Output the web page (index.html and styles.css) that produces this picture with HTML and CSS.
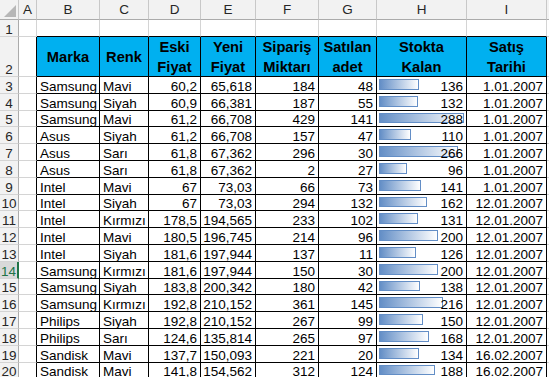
FILE: index.html
```html
<!DOCTYPE html>
<html lang="tr">
<head>
<meta charset="utf-8">
<title>Stok</title>
<link rel="stylesheet" href="styles.css">
</head>
<body>
<div class="sheet">
  <div class="ch corner"><svg width="18" height="19" viewBox="0 0 18 19"><polygon points="16,5 16,17 4,17" fill="#b7b7b7"/></svg></div>
  <div class="ch">A</div><div class="ch">B</div><div class="ch">C</div><div class="ch">D</div><div class="ch">E</div><div class="ch">F</div><div class="ch">G</div><div class="ch">H</div><div class="ch">I</div><div class="ch last"></div>

  <div class="rh">1</div><div class="c"></div><div class="c top"></div><div class="c top"></div><div class="c top"></div><div class="c top"></div><div class="c top"></div><div class="c top"></div><div class="c top"></div><div class="c top"></div><div class="c"></div>

  <div class="rh">2</div><div class="c a"></div>
  <div class="c t hd">Marka</div><div class="c t hd">Renk</div><div class="c t hd">Eski<br>Fiyat</div><div class="c t hd">Yeni<br>Fiyat</div><div class="c t hd">Sipariş<br>Miktarı</div><div class="c t hd">Satılan<br>adet</div><div class="c t hd">Stokta<br>Kalan</div><div class="c t hd">Satış<br>Tarihi</div><div class="c"></div>

  <div class="rh">3</div><div class="c a"></div><div class="c t">Samsung</div><div class="c t">Mavi</div><div class="c t n">60,2</div><div class="c t n">65,618</div><div class="c t n">184</div><div class="c t n">48</div><div class="c t n db"><span class="track"><span class="bar" style="width:47.2%"></span></span><span class="v">136</span></div><div class="c t n">1.01.2007</div><div class="c"></div>
  <div class="rh">4</div><div class="c a"></div><div class="c t">Samsung</div><div class="c t">Siyah</div><div class="c t n">60,9</div><div class="c t n">66,381</div><div class="c t n">187</div><div class="c t n">55</div><div class="c t n db"><span class="track"><span class="bar" style="width:45.8%"></span></span><span class="v">132</span></div><div class="c t n">1.01.2007</div><div class="c"></div>
  <div class="rh">5</div><div class="c a"></div><div class="c t">Samsung</div><div class="c t">Mavi</div><div class="c t n">61,2</div><div class="c t n">66,708</div><div class="c t n">429</div><div class="c t n">141</div><div class="c t n db"><span class="track"><span class="bar" style="width:100%"></span></span><span class="v">288</span></div><div class="c t n">1.01.2007</div><div class="c"></div>
  <div class="rh">6</div><div class="c a"></div><div class="c t">Asus</div><div class="c t">Siyah</div><div class="c t n">61,2</div><div class="c t n">66,708</div><div class="c t n">157</div><div class="c t n">47</div><div class="c t n db"><span class="track"><span class="bar" style="width:38.2%"></span></span><span class="v">110</span></div><div class="c t n">1.01.2007</div><div class="c"></div>
  <div class="rh">7</div><div class="c a"></div><div class="c t">Asus</div><div class="c t">Sarı</div><div class="c t n">61,8</div><div class="c t n">67,362</div><div class="c t n">296</div><div class="c t n">30</div><div class="c t n db"><span class="track"><span class="bar" style="width:92.4%"></span></span><span class="v">266</span></div><div class="c t n">1.01.2007</div><div class="c"></div>
  <div class="rh">8</div><div class="c a"></div><div class="c t">Asus</div><div class="c t">Sarı</div><div class="c t n">61,8</div><div class="c t n">67,362</div><div class="c t n">2</div><div class="c t n">27</div><div class="c t n db"><span class="track"><span class="bar" style="width:33.3%"></span></span><span class="v">96</span></div><div class="c t n">1.01.2007</div><div class="c"></div>
  <div class="rh">9</div><div class="c a"></div><div class="c t">Intel</div><div class="c t">Mavi</div><div class="c t n">67</div><div class="c t n">73,03</div><div class="c t n">66</div><div class="c t n">73</div><div class="c t n db"><span class="track"><span class="bar" style="width:49%"></span></span><span class="v">141</span></div><div class="c t n">1.01.2007</div><div class="c"></div>
  <div class="rh">10</div><div class="c a"></div><div class="c t">Intel</div><div class="c t">Siyah</div><div class="c t n">67</div><div class="c t n">73,03</div><div class="c t n">294</div><div class="c t n">132</div><div class="c t n db"><span class="track"><span class="bar" style="width:56.3%"></span></span><span class="v">162</span></div><div class="c t n">12.01.2007</div><div class="c"></div>
  <div class="rh">11</div><div class="c a"></div><div class="c t">Intel</div><div class="c t">Kırmızı</div><div class="c t n">178,5</div><div class="c t n">194,565</div><div class="c t n">233</div><div class="c t n">102</div><div class="c t n db"><span class="track"><span class="bar" style="width:45.5%"></span></span><span class="v">131</span></div><div class="c t n">12.01.2007</div><div class="c"></div>
  <div class="rh">12</div><div class="c a"></div><div class="c t">Intel</div><div class="c t">Mavi</div><div class="c t n">180,5</div><div class="c t n">196,745</div><div class="c t n">214</div><div class="c t n">96</div><div class="c t n db"><span class="track"><span class="bar" style="width:69.4%"></span></span><span class="v">200</span></div><div class="c t n">12.01.2007</div><div class="c"></div>
  <div class="rh">13</div><div class="c a"></div><div class="c t">Intel</div><div class="c t">Siyah</div><div class="c t n">181,6</div><div class="c t n">197,944</div><div class="c t n">137</div><div class="c t n">11</div><div class="c t n db"><span class="track"><span class="bar" style="width:43.8%"></span></span><span class="v">126</span></div><div class="c t n">12.01.2007</div><div class="c"></div>
  <div class="rh sel">14</div><div class="c a"></div><div class="c t">Samsung</div><div class="c t">Kırmızı</div><div class="c t n">181,6</div><div class="c t n">197,944</div><div class="c t n">150</div><div class="c t n">30</div><div class="c t n db"><span class="track"><span class="bar" style="width:69.4%"></span></span><span class="v">200</span></div><div class="c t n">12.01.2007</div><div class="c"></div>
  <div class="rh">15</div><div class="c a"></div><div class="c t">Samsung</div><div class="c t">Siyah</div><div class="c t n">183,8</div><div class="c t n">200,342</div><div class="c t n">180</div><div class="c t n">42</div><div class="c t n db"><span class="track"><span class="bar" style="width:47.9%"></span></span><span class="v">138</span></div><div class="c t n">12.01.2007</div><div class="c"></div>
  <div class="rh">16</div><div class="c a"></div><div class="c t">Samsung</div><div class="c t">Kırmızı</div><div class="c t n">192,8</div><div class="c t n">210,152</div><div class="c t n">361</div><div class="c t n">145</div><div class="c t n db"><span class="track"><span class="bar" style="width:75%"></span></span><span class="v">216</span></div><div class="c t n">12.01.2007</div><div class="c"></div>
  <div class="rh">17</div><div class="c a"></div><div class="c t">Philips</div><div class="c t">Siyah</div><div class="c t n">192,8</div><div class="c t n">210,152</div><div class="c t n">267</div><div class="c t n">99</div><div class="c t n db"><span class="track"><span class="bar" style="width:52.1%"></span></span><span class="v">150</span></div><div class="c t n">12.01.2007</div><div class="c"></div>
  <div class="rh">18</div><div class="c a"></div><div class="c t">Philips</div><div class="c t">Sarı</div><div class="c t n">124,6</div><div class="c t n">135,814</div><div class="c t n">265</div><div class="c t n">97</div><div class="c t n db"><span class="track"><span class="bar" style="width:58.3%"></span></span><span class="v">168</span></div><div class="c t n">12.01.2007</div><div class="c"></div>
  <div class="rh">19</div><div class="c a"></div><div class="c t">Sandisk</div><div class="c t">Mavi</div><div class="c t n">137,7</div><div class="c t n">150,093</div><div class="c t n">221</div><div class="c t n">20</div><div class="c t n db"><span class="track"><span class="bar" style="width:46.5%"></span></span><span class="v">134</span></div><div class="c t n">16.02.2007</div><div class="c"></div>
  <div class="rh">20</div><div class="c a"></div><div class="c t">Sandisk</div><div class="c t">Mavi</div><div class="c t n">141,8</div><div class="c t n">154,562</div><div class="c t n">312</div><div class="c t n">124</div><div class="c t n db"><span class="track"><span class="bar" style="width:65.3%"></span></span><span class="v">188</span></div><div class="c t n">16.02.2007</div><div class="c"></div>
</div>
</body>
</html>
```
FILE: styles.css
```css
html, body {
  margin: 0;
  padding: 0;
  overflow: hidden;
  background: #ffffff;
}

.sheet {
  display: grid;
  grid-template-columns: 19px 18px 63px 49px 52px 55px 63px 58px 90px 80px 10px;
  grid-template-rows: 20px 17px 40px repeat(18, 16.8px);
  font-family: "Liberation Sans", Arial, sans-serif;
  color: #000;
}

.ch {
  box-sizing: border-box;
  background: #f2f2f2;
  border-right: 1px solid #c8c8c8;
  border-bottom: 1px solid #ababab;
  display: flex;
  align-items: center;
  justify-content: center;
  font-size: 13.5px;
  color: #262626;
}

.ch.corner {
  align-items: stretch;
  justify-content: flex-start;
}

.ch.last {
  border-right: none;
}

.rh {
  box-sizing: border-box;
  background: #f2f2f2;
  border-right: 1px solid #ababab;
  border-bottom: 1px solid #d4d4d4;
  display: flex;
  align-items: flex-end;
  justify-content: center;
  padding: 0;
  font-size: 13.5px;
  line-height: 13px;
  color: #262626;
}

.rh.sel {
  background: #d9d9d9;
  color: #217346;
  border-right: 2px solid #217346;
}

.c {
  box-sizing: border-box;
  border-right: 1px solid #d4d4d4;
  border-bottom: 1px solid #d4d4d4;
  display: flex;
  align-items: flex-end;
  padding: 0 3px 0 3px;
  font-size: 13.5px;
  line-height: 13px;
  white-space: nowrap;
  overflow: hidden;
}

.c.a {
  border-right-color: #000;
}

.c.top {
  border-bottom-color: #000;
}

.c.t {
  border-right-color: #000;
  border-bottom-color: #000;
}

.c.n {
  justify-content: flex-end;
}

.c.hd {
  background: #00b0f0;
  font-weight: bold;
  font-size: 14.7px;
  line-height: 20px;
  text-align: center;
  justify-content: center;
  align-items: center;
  padding: 0;
}

.db {
  position: relative;
}

.track {
  position: absolute;
  left: 2px;
  right: 2px;
  top: 2px;
  bottom: 3px;
}

.bar {
  display: block;
  box-sizing: border-box;
  height: 100%;
  border: 1px solid #638ec6;
  background: linear-gradient(to right, #638ec6, #ffffff);
}

.v {
  position: relative;
}
```
